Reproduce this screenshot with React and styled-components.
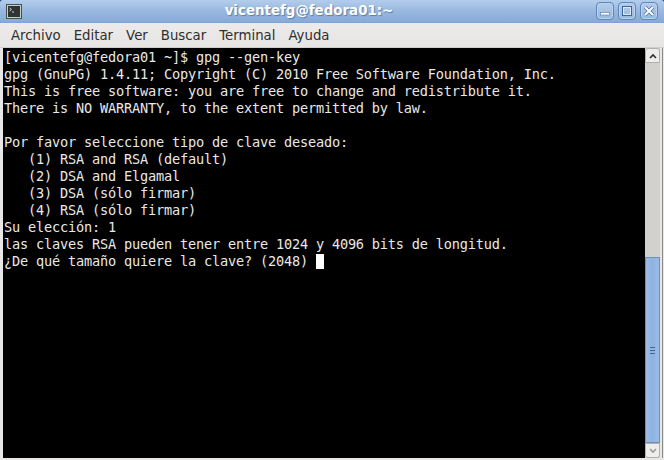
import React from 'react';
import styled, { createGlobalStyle } from 'styled-components';

const GlobalStyle = createGlobalStyle`
  html, body {
    margin: 0;
    padding: 0;
    background: #e8e7e6;
  }
`;

const Win = styled.div`
  width: 664px;
  height: 460px;
  display: flex;
  flex-direction: column;
  overflow: hidden;
  background: #24477c;
`;

const TitleBar = styled.div`
  height: 23px;
  flex: none;
  display: flex;
  align-items: center;
  box-sizing: border-box;
  padding: 0 6px;
  border-radius: 3px 3px 0 0;
  border-bottom: 1px solid #7fa3d2;
  background: linear-gradient(#b3cdec, #98b8e0 50%, #87aad8);
`;

const TitleText = styled.div`
  flex: 1;
  text-align: center;
  font: bold 13.4px/18px "DejaVu Sans", sans-serif;
  color: #fff;
  text-shadow: 1px 1px 1px #5b7ba6;
`;

const AppIcon = styled.svg`
  width: 16px;
  height: 15px;
  flex: none;
  display: block;
`;

const Buttons = styled.div`
  flex: none;
  display: flex;
  gap: 4px;
`;

const WinButton = styled.div`
  width: 18px;
  height: 18px;
  box-sizing: border-box;
  border: 1px solid #5f86b8;
  border-radius: 4px;
  background: linear-gradient(#b4cdeb, #97b7e0);
  box-shadow: inset 0 0 0 1px #bcd2ee;
  display: flex;
  align-items: center;
  justify-content: center;
`;

const MenuBar = styled.div`
  height: 25px;
  flex: none;
  display: flex;
  align-items: center;
  box-sizing: border-box;
  padding: 1px 0 0 11px;
  gap: 13px;
  background: linear-gradient(#ecebea, #e6e5e4);
  border-bottom: 1px solid #d2d0ce;
  font: 13.3px/18px "DejaVu Sans", sans-serif;
  color: #2e2e2e;
`;

const Body = styled.div`
  flex: 1;
  min-height: 0;
  display: flex;
  padding: 0 3px 2px 3px;
  background: #e8e7e6;
`;

const Terminal = styled.pre`
  flex: 1;
  margin: 0;
  padding: 1px 0 0 1px;
  background: #000;
  color: #e8e8e8;
  font: 13.6px/17px "DejaVu Sans Mono", monospace;
  letter-spacing: -0.187px;
  overflow: hidden;
`;

const Cursor = styled.span`
  display: inline-block;
  width: 8px;
  height: 15px;
  vertical-align: -3px;
  background: #fff;
`;

const Scrollbar = styled.div`
  width: 15px;
  flex: none;
  display: flex;
  flex-direction: column;
  background: #d3d1ce;
`;

const Stepper = styled.div`
  height: 15px;
  flex: none;
  box-sizing: border-box;
  display: flex;
  align-items: center;
  justify-content: center;
  background: #eeedec;
  border: 1px solid #b2b0ad;
  border-radius: ${(p) => (p.$up ? '3px 3px 0 0' : '0 0 3px 3px')};
`;

const Track = styled.div`
  flex: 1;
  display: flex;
  flex-direction: column;
  justify-content: flex-end;
`;

const Thumb = styled.div`
  height: 186px;
  flex: none;
  box-sizing: border-box;
  display: flex;
  flex-direction: column;
  align-items: center;
  justify-content: center;
  gap: 2px;
  border: 1px solid #6d8fbc;
  background: linear-gradient(90deg, #9dbde6, #8fb2e0 50%, #9dbde6);
`;

const Grip = styled.div`
  width: 5px;
  height: 1px;
  background: #47668f;
`;

const EdgeLine = styled.div`
  width: 1px;
  flex: none;
  margin-left: 2px;
  margin-right: -2px;
  background: #8d8b88;
`;

const MENU = ['Archivo', 'Editar', 'Ver', 'Buscar', 'Terminal', 'Ayuda'];

const LINES = `[vicentefg@fedora01 ~]$ gpg --gen-key
gpg (GnuPG) 1.4.11; Copyright (C) 2010 Free Software Foundation, Inc.
This is free software: you are free to change and redistribute it.
There is NO WARRANTY, to the extent permitted by law.

Por favor seleccione tipo de clave deseado:
   (1) RSA and RSA (default)
   (2) DSA and Elgamal
   (3) DSA (sólo firmar)
   (4) RSA (sólo firmar)
Su elección: 1
las claves RSA pueden tener entre 1024 y 4096 bits de longitud.
¿De qué tamaño quiere la clave? (2048) `;

const App = () => {
  return (
    <Win>
      <GlobalStyle />
      <TitleBar>
        <AppIcon viewBox="0 0 16 15">
          <rect x="0.5" y="0.5" width="15" height="14" fill="#c9cdc9" stroke="#4a4f55" />
          <rect x="2" y="2" width="12" height="11" fill="#2f3632" />
          <path d="M3.5 4l2 1.5-2 1.5M6 8h2" stroke="#d8dcd8" fill="none" />
        </AppIcon>
        <TitleText>vicentefg@fedora01:~</TitleText>
        <Buttons>
          <WinButton>
            <svg width="10" height="10" viewBox="0 0 10 10">
              <rect x="0.5" y="6.5" width="9" height="2.5" fill="#fff" stroke="#3f6597" strokeWidth="0.5" />
            </svg>
          </WinButton>
          <WinButton>
            <svg width="10" height="10" viewBox="0 0 10 10">
              <rect x="1" y="1" width="8" height="8" fill="none" stroke="#3f6597" strokeWidth="2" />
              <rect x="1.5" y="1.5" width="7" height="7" fill="none" stroke="#dfe9f6" strokeWidth="1" />
            </svg>
          </WinButton>
          <WinButton>
            <svg width="12" height="12" viewBox="0 0 12 12">
              <path d="M2 2l8 8M10 2l-8 8" stroke="#3f6597" strokeWidth="3.4" />
              <path d="M2 2l8 8M10 2l-8 8" stroke="#fff" strokeWidth="2.2" />
            </svg>
          </WinButton>
        </Buttons>
      </TitleBar>
      <MenuBar>
        {MENU.map((m) => (
          <span key={m}>{m}</span>
        ))}
      </MenuBar>
      <Body>
        <Terminal>
          {LINES}
          <Cursor />
        </Terminal>
        <Scrollbar>
          <Stepper $up>
            <svg width="8" height="6" viewBox="0 0 8 6">
              <path d="M1 5l3-3 3 3" fill="none" stroke="#2e2e2e" strokeWidth="1.6" />
            </svg>
          </Stepper>
          <Track>
            <Thumb>
              <Grip />
              <Grip />
              <Grip />
            </Thumb>
          </Track>
          <Stepper>
            <svg width="8" height="6" viewBox="0 0 8 6">
              <path d="M1 1l3 3 3-3" fill="none" stroke="#9a9a98" strokeWidth="1.6" />
            </svg>
          </Stepper>
        </Scrollbar>
        <EdgeLine />
      </Body>
    </Win>
  );
};

export default App;
